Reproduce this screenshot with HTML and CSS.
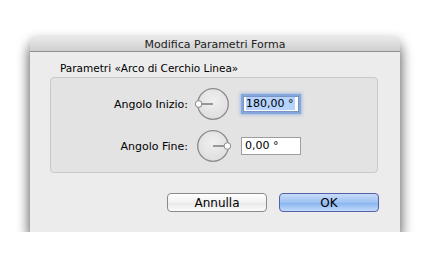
FILE: index.html
```html
<!DOCTYPE html>
<html lang="it">
<head>
  <meta charset="UTF-8" />
  <title>Modifica Parametri Forma</title>
  <link rel="stylesheet" href="styles.css">
</head>
<body>
  <div class="window">
    <div class="titlebar">Modifica Parametri Forma</div>
    <div class="content">
      <div class="group-label">Parametri «Arco di Cerchio Linea»</div>
      <div class="group">
        <div class="row">
          <label>Angolo Inizio:</label>
          <svg class="dial" width="36" height="34" viewBox="0 0 36 34">
            <defs>
              <radialGradient id="dg1" cx="50%" cy="40%" r="60%">
                <stop offset="0" stop-color="#f0f0f0"/>
                <stop offset="1" stop-color="#dedede"/>
              </radialGradient>
            </defs>
            <circle cx="18" cy="17" r="15.3" fill="url(#dg1)" stroke="#8c8c8c" stroke-width="1.3"/>
            <line x1="5" y1="17" x2="18" y2="17" stroke="#6a6a6a" stroke-width="1.3"/>
            <circle cx="3.6" cy="17" r="3.3" fill="#fff" stroke="#888" stroke-width="1"/>
          </svg>
          <div class="field focus"><span class="sel">180,00 °</span></div>
        </div>
        <div class="row">
          <label>Angolo Fine:</label>
          <svg class="dial" width="36" height="34" viewBox="0 0 36 34">
            <defs>
              <radialGradient id="dg2" cx="50%" cy="40%" r="60%">
                <stop offset="0" stop-color="#f0f0f0"/>
                <stop offset="1" stop-color="#dedede"/>
              </radialGradient>
            </defs>
            <circle cx="18" cy="17" r="15.3" fill="url(#dg2)" stroke="#8c8c8c" stroke-width="1.3"/>
            <line x1="18" y1="17" x2="31" y2="17" stroke="#6a6a6a" stroke-width="1.3"/>
            <circle cx="32.4" cy="17" r="3.3" fill="#fff" stroke="#888" stroke-width="1"/>
          </svg>
          <div class="field">0,00 °</div>
        </div>
      </div>
      <div class="buttons">
        <button class="btn">Annulla</button>
        <button class="btn default">OK</button>
      </div>
    </div>
  </div>
</body>
</html>
```

FILE: styles.css
```css
* { box-sizing: border-box; }
body {
  margin: 0;
  padding: 37px 0 0 30px;
  background: #fff;
  font-family: 'DejaVu Sans', 'Liberation Sans', sans-serif;
  color: #000;
}
.window {
  width: 370px;
  height: 195px;
  background: #ececec;
  box-shadow: 0 10px 14px rgba(0,0,0,0.6), 0 2px 12px rgba(0,0,0,0.2);
  border-radius: 4px 4px 0 0;
  display: flex;
  flex-direction: column;
}
.titlebar {
  height: 15px;
  background: linear-gradient(#e9e9e9, #cfcfcf);
  border-bottom: 1px solid #8f8f8f;
  border-radius: 4px 4px 0 0;
  text-align: center;
  font-size: 11px;
  line-height: 15px;
  color: #222;
}
.content { padding: 10px 22px 0 20px; }
.group-label { font-size: 10.5px; line-height: 13px; padding-left: 10px; margin-bottom: 2px; }
.group {
  height: 96px;
  background: #e3e3e3;
  border: 1px solid #c9c9c9;
  border-radius: 4px;
  padding-top: 9px;
  display: flex;
  flex-direction: column;
  gap: 8px;
}
.row { display: flex; align-items: center; height: 34px; }
.row label {
  width: 144px;
  text-align: right;
  font-size: 11px;
  padding-right: 7px;
}
.dial { display: block; }
.field {
  margin-left: 10px;
  width: 60px;
  height: 18px;
  background: #fff;
  border: 1px solid #9e9e9e;
  font-size: 11px;
  line-height: 16px;
  padding-left: 3px;
}
.field.focus {
  margin-left: 12px;
  width: 56px;
  height: 16px;
  border-color: #7a95c4;
  box-shadow: 0 0 0 2px #84a7e0, 0 0 3px 3px rgba(110,150,220,0.5);
  line-height: 14px;
  padding-left: 2px;
}
.sel { background: #b5d3fc; padding-right: 1px; }
.buttons {
  display: flex;
  justify-content: flex-end;
  gap: 12px;
  margin-top: 20px;
  margin-right: -1px;
}
.btn {
  width: 100px;
  height: 19px;
  border: 1px solid #8a8a8a;
  border-radius: 4px;
  background: linear-gradient(#ffffff, #f1f1f1 50%, #e8e8e8 51%, #fbfbfb);
  font-family: inherit;
  font-size: 12px;
  line-height: 16px;
  padding: 0;
  color: #000;
}
.btn.default {
  border-color: #5560a8;
  background: linear-gradient(#c9dcf8, #9cc1f2 50%, #84b2ef 51%, #c2dcfa);
}
```
